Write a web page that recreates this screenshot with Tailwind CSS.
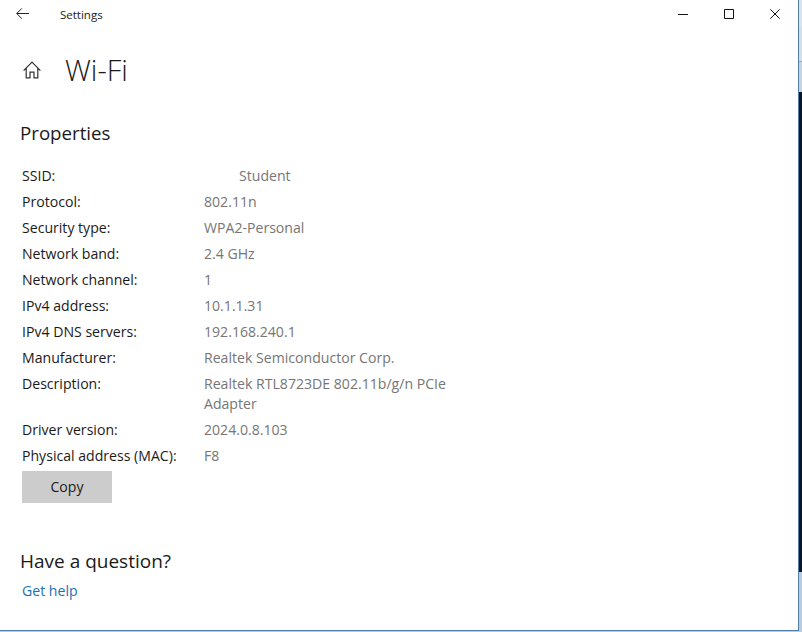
<!DOCTYPE html>
<html lang="en">
<head>
    <meta charset="UTF-8">
    <title>Settings</title>
    <script src="https://cdn.jsdelivr.net/npm/@tailwindcss/browser@4"></script>
</head>
<body class="w-[802px] h-[632px] overflow-hidden bg-[#b9cbdc] font-['Open_Sans',sans-serif] text-[#1a1a1a]">
    <div class="flex w-[802px] h-[632px]">
        <!-- Settings window -->
        <div class="w-[799px] h-[631px] bg-white border-r border-b border-[#4f7fa8] flex flex-col">
            <!-- Title bar -->
            <div class="flex items-center h-[30px] shrink-0">
                <svg class="w-[13px] h-[11px] ml-[16px] -mt-[3px]" viewBox="0 0 13 11" fill="none" stroke="#222" stroke-width="1">
                    <path d="M13 5.5H.8M5.8.4L.7 5.5l5.1 5.1"/>
                </svg>
                <span class="ml-[31px] text-[11.5px]">Settings</span>
                <div class="ml-auto flex items-center -mt-[3px]">
                    <svg class="w-[10px] h-[10px]" viewBox="0 0 10 10" fill="none" stroke="#111" stroke-width="1"><path d="M0 5.5h10"/></svg>
                    <svg class="w-[10px] h-[10px] ml-[36px]" viewBox="0 0 10 10" fill="none" stroke="#111" stroke-width="1"><path d="M.5.5h9v9h-9z"/></svg>
                    <svg class="w-[10px] h-[10px] ml-[36px] mr-[18px]" viewBox="0 0 10 10" fill="none" stroke="#111" stroke-width="1"><path d="M.3.3l9.4 9.4M9.7.3L.3 9.7"/></svg>
                </div>
            </div>

            <!-- Page header -->
            <div class="flex items-center h-[80px] pl-[23px] shrink-0">
                <svg class="w-[18px] h-[18px]" viewBox="0 0 18 18" fill="none" stroke="#333" stroke-width="1.2">
                    <path d="M.6 9.6L9 1.2l8.4 8.4M3.2 7.2v9.6H7v-5.6h4v5.6h3.8V7.2"/>
                </svg>
                <h1 class="ml-[24px] -mt-[2px] text-[29px] font-light leading-none">Wi-Fi</h1>
            </div>

            <div class="pl-[20px] pt-[9px] flex-1 flex flex-col">
                <h2 class="text-[18.7px] leading-[28px]">Properties</h2>

                <div class="mt-[16px] ml-[2px] text-[14.1px] leading-[26px]">
                    <div class="flex h-[26px]"><span class="w-[182px]">SSID:</span><span class="text-[#767676] pl-[35px]">Student</span></div>
                    <div class="flex h-[26px]"><span class="w-[182px]">Protocol:</span><span class="text-[#767676]">802.11n</span></div>
                    <div class="flex h-[26px]"><span class="w-[182px]">Security type:</span><span class="text-[#767676]">WPA2-Personal</span></div>
                    <div class="flex h-[26px]"><span class="w-[182px]">Network band:</span><span class="text-[#767676]">2.4 GHz</span></div>
                    <div class="flex h-[26px]"><span class="w-[182px]">Network channel:</span><span class="text-[#767676]">1</span></div>
                    <div class="flex h-[26px]"><span class="w-[182px]">IPv4 address:</span><span class="text-[#767676]">10.1.1.31</span></div>
                    <div class="flex h-[26px]"><span class="w-[182px]">IPv4 DNS servers:</span><span class="text-[#767676]">192.168.240.1</span></div>
                    <div class="flex h-[26px]"><span class="w-[182px]">Manufacturer:</span><span class="text-[#767676]">Realtek Semiconductor Corp.</span></div>
                    <div class="flex h-[46px]"><span class="w-[182px]">Description:</span><span class="w-[250px] text-[#767676] leading-[20px] pt-[3px]">Realtek RTL8723DE 802.11b/g/n PCIe Adapter</span></div>
                    <div class="flex h-[26px]"><span class="w-[182px]">Driver version:</span><span class="text-[#767676]">2024.0.8.103</span></div>
                    <div class="flex h-[26px]"><span class="w-[182px] whitespace-nowrap">Physical address (MAC):</span><span class="text-[#767676]">F8</span></div>
                </div>

                <button class="mt-[2px] ml-[2px] w-[90px] h-[32px] bg-[#cccccc] text-[14.1px] text-center">Copy</button>

                <h2 class="mt-[44px] text-[19px] leading-[28px]">Have a question?</h2>
                <a class="mt-[3px] ml-[2px] text-[14.1px] leading-[26px] text-[#1a73b0]">Get help</a>
            </div>
        </div>

        <!-- Desktop behind the window -->
        <div class="w-[3px] h-[632px] flex flex-col">
            <div class="h-[61px] bg-[#d5dde5] border-t-[27px] border-[#dbe2e9]"></div>
            <div class="h-[31px] bg-[#c9d3dd] border-t border-[#9aa6b2]"></div>
            <div class="h-[480px] bg-[#0a1626]"></div>
            <div class="flex-1 bg-[#b9cbdc]"></div>
        </div>
    </div>
</body>
</html>
